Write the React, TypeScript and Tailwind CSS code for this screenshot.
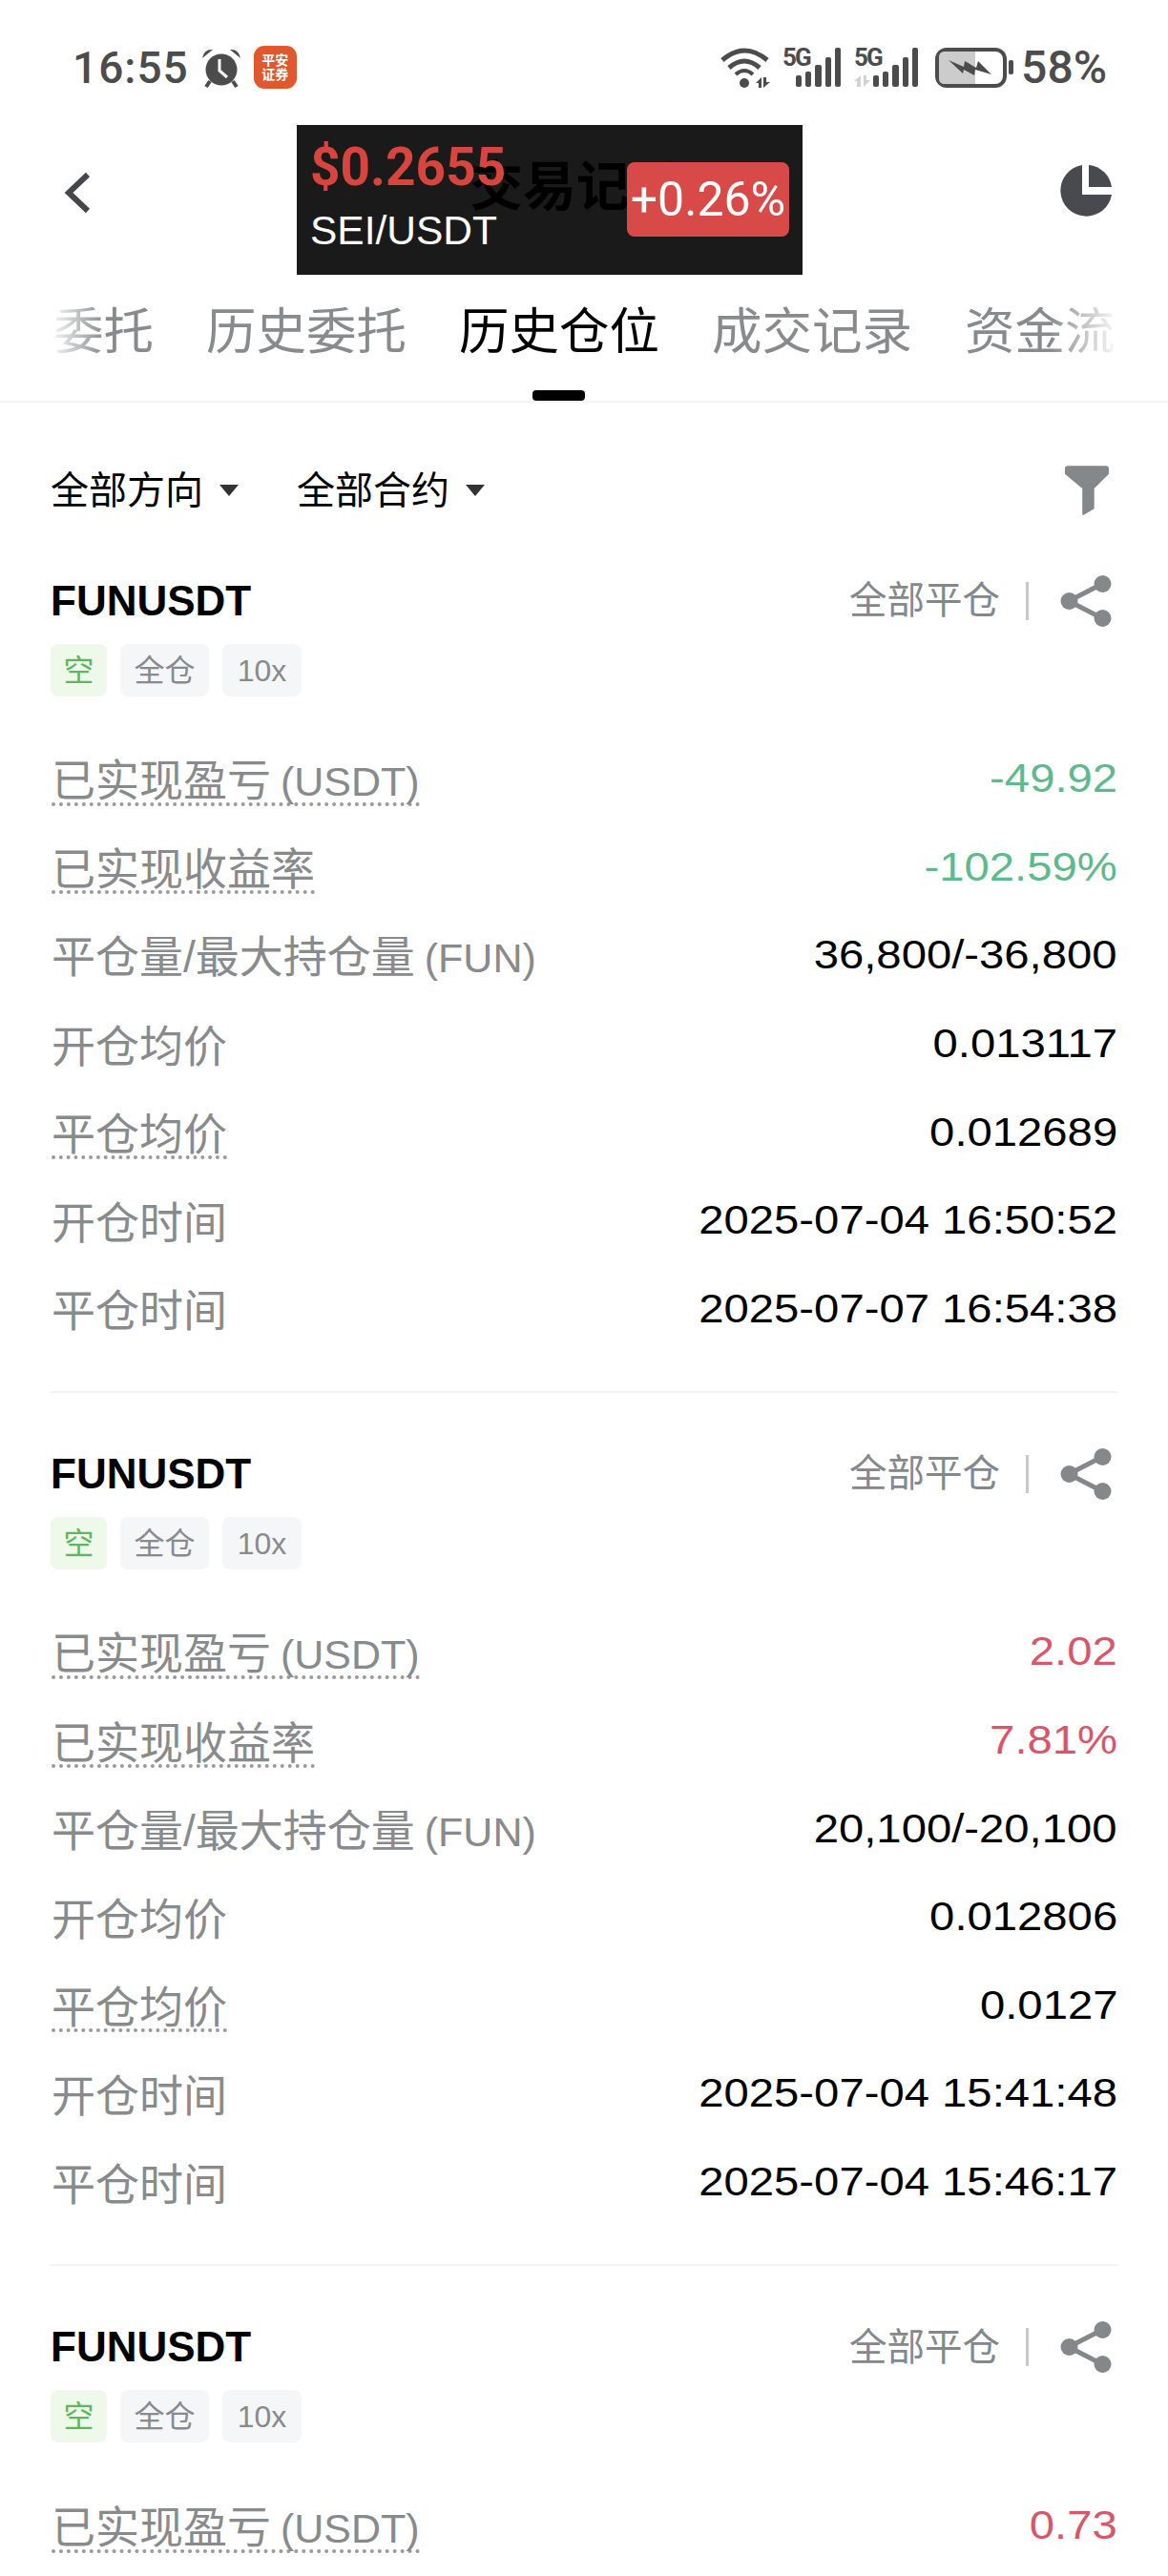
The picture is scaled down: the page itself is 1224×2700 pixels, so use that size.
const cjk = '"Liberation Sans", "Noto Sans CJK SC", sans-serif';

const BackIcon = () => (
  <svg width="32" height="46" viewBox="0 0 32 46" fill="none">
    <path d="M27 4 L7 23 L27 42" stroke="#44464b" strokeWidth="6" />
  </svg>
);

const PieIcon = () => (
  <svg width="54" height="54" viewBox="0 0 54 54">
    <path d="M23 0 A27 27 0 1 0 54 31 H23 Z" fill="#484a50" />
    <path d="M30 0 A27 27 0 0 1 54 23 H30 Z" fill="#484a50" />
  </svg>
);

const FilterIcon = () => (
  <svg width="46" height="54" viewBox="0 0 48 54">
    <path d="M3 0 H45 Q48 0 48 3 V9 L32 25 V47 L20 54 Q19 54 19 52 V25 L0 9 V3 Q0 0 3 0 Z" fill="#85888a" />
  </svg>
);

const ShareIcon = () => (
  <svg width="54" height="54" viewBox="0 0 54 54">
    <path d="M9 27 L44 9 M9 27 L44 45" stroke="#85888a" strokeWidth="5" />
    <circle cx="9.5" cy="27" r="9" fill="#85888a" />
    <circle cx="44.5" cy="9" r="9" fill="#85888a" />
    <circle cx="44.5" cy="45" r="9" fill="#85888a" />
  </svg>
);

const Signal = ({ dim }: { dim?: boolean }) => (
  <div className={`relative flex h-[41px] items-end justify-end gap-[4px] ${dim ? "w-[67px]" : "w-[61px]"}`}>
    <span className="absolute left-0 top-0 font-['Roboto'] text-[26px] font-bold leading-[20px] tracking-[-2px]">5G</span>
    {dim && (
      <svg width="17" height="12" viewBox="0 0 17 12" className="absolute bottom-0 left-0">
        <path d="M7 0 V12 H3 V6 H0 Z M10 12 V0 H13 V5 H17 Z" fill="#d2d2d2" />
      </svg>
    )}
    <div className="h-[12px] w-[6.3px] rounded-[2px] bg-[#4c4c4c]" />
    <div className="h-[16px] w-[6.3px] rounded-[2px] bg-[#4c4c4c]" />
    <div className="h-[23px] w-[6.3px] rounded-[2px] bg-[#4c4c4c]" />
    <div className="h-[31px] w-[6.3px] rounded-[2px] bg-[#4c4c4c]" />
    <div className="h-[41px] w-[6.3px] rounded-[2px] bg-[#4c4c4c]" />
  </div>
);

const StatusBar = () => (
  <div className="flex h-[131px] items-center justify-between pl-[76px] pr-[64px] pt-[10px] text-[#4c4c4c]">
    <div className="flex items-center">
      <span className="font-['Roboto'] text-[46px] font-medium leading-none tracking-[1px]">16:55</span>
      <svg width="44" height="42" viewBox="0 0 42 42" className="ml-[12px]">
        <circle cx="21" cy="23" r="16.5" fill="#4c4c4c" />
        <path d="M19 12 V24 L27 31" stroke="#fff" strokeWidth="3" fill="none" />
        <path d="M1 11 Q3 1 12 2 Z M41 11 Q39 1 30 2 Z" fill="#4c4c4c" />
        <path d="M9 35 L5 41 M33 35 L37 41" stroke="#4c4c4c" strokeWidth="4" />
      </svg>
      <div className="ml-[12px] flex h-[45px] w-[45px] flex-col items-center justify-center rounded-[11px] bg-[#e0582d] text-[14px] font-bold leading-[15px] text-white">
        <span>平安</span>
        <span>证券</span>
      </div>
    </div>
    <div className="flex items-center">
      <svg width="52" height="42" viewBox="0 0 52 42" fill="none">
        <path d="M2 13 Q25 -7 49 13" stroke="#4c4c4c" strokeWidth="5" />
        <path d="M9 21 Q25 7 41 21" stroke="#4c4c4c" strokeWidth="5" />
        <path d="M16 28 Q25 20 34 28" stroke="#4c4c4c" strokeWidth="4" />
        <circle cx="25" cy="37" r="5" fill="#4c4c4c" />
        <path d="M43 31 V42 H40 V37 H37 Z M45 42 V31 H48 V36 H52 Z" fill="#4c4c4c" />
      </svg>
      <div className="ml-[13px]"><Signal /></div>
      <div className="ml-[14px]"><Signal dim /></div>
      <svg width="82" height="42" viewBox="0 0 82 42" className="ml-[18px]">
        <rect x="2" y="2" width="71" height="38" rx="10" fill="#fff" stroke="#4c4c4c" strokeWidth="4" />
        <path d="M4 10 Q4 4 10 4 H42 V38 H10 Q4 38 4 32 Z" fill="#cccccc" />
        <path d="M14 13 L30 20 L31 14 L43 21 L45 14 L59 28 L42 23 L41 29 L30 23 L29 27 Z" fill="#4c4c4c" />
        <rect x="77" y="13" width="5" height="15" rx="2" fill="#4c4c4c" />
      </svg>
      <span className="ml-[8px] font-['Roboto'] text-[48px] font-medium leading-none">58%</span>
    </div>
  </div>
);

const NavBar = () => (
  <div className="relative flex h-[157px] items-center justify-between pl-[65px] pr-[59px]">
    <div className="absolute left-[311px] top-0 h-[157px] w-[530px] bg-[#1a1a1a]" />
    <div className="-mt-[16px]"><BackIcon /></div>
    <div className="relative -mt-[28px] w-[224px] text-center text-[56px] font-bold leading-none text-black">交易记录</div>
    <div className="-mt-[20px]"><PieIcon /></div>
    <div className="absolute left-[325px] top-[17px] font-['Roboto'] text-[55px] font-bold leading-none text-[#d8453f]">$0.2655</div>
    <div className="absolute left-[325px] top-[90px] text-[42.5px] leading-none text-white">SEI/USDT</div>
    <div className="absolute left-[657px] top-[39px] flex h-[78px] w-[170px] items-center justify-center rounded-[8px] bg-[#d84a47] font-['Roboto'] text-[50px] leading-none text-white">+0.26%</div>
  </div>
);

const Tabs = () => (
  <div className="relative h-[134px] border-b-2 border-[#f3f3f3]">
    <div className="flex items-center gap-[55px] pl-[56px] pt-[34px] text-[52.5px] leading-none text-[#888a8c]">
      <span>委托</span>
      <span>历史委托</span>
      <span className="text-black">历史仓位</span>
      <span>成交记录</span>
      <span className="w-[160px] overflow-hidden whitespace-nowrap">资金流水</span>
    </div>
    <div className="absolute left-[558px] top-[121px] h-[11px] w-[55px] rounded-[4px] bg-black" />
    <div className="absolute left-[50px] top-0 h-[110px] w-[60px] bg-gradient-to-r from-white to-transparent" />
    <div className="absolute left-[1100px] top-0 h-[110px] w-[74px] bg-gradient-to-l from-white to-transparent" />
    <div className="absolute left-[1170px] top-0 h-[110px] w-[54px] bg-white" />
  </div>
);

const Caret = () => <div className="h-0 w-0 border-x-[10px] border-t-[12px] border-x-transparent border-t-[#333333]" />;

const Filters = () => (
  <div className="flex h-[181px] items-center justify-between pl-[53px] pr-[62px] pt-[2px]">
    <div className="flex items-center text-[40px] leading-none text-black">
      <span>全部方向</span>
      <div className="ml-[17px] mr-[61px]"><Caret /></div>
      <span>全部合约</span>
      <div className="ml-[17px]"><Caret /></div>
    </div>
    <FilterIcon />
  </div>
);

type Row = { label: string; unit?: string; value: string; dotted?: boolean; color?: string };

const InfoRow = ({ label, unit, value, dotted, color }: Row) => (
  <div className="flex h-[92.6px] items-center justify-between">
    <span className={`ml-[1px] mt-[9px] border-b-4 border-dotted text-[46px] leading-[44px] text-[#888a8c] ${dotted ? "border-[#9a9a9a]" : "border-transparent"}`}>
      {label}
      {unit && <span className="ml-[10px] text-[43px]">{unit}</span>}
    </span>
    <span className={`origin-right scale-x-[1.125] text-[42px] leading-none ${color ?? "text-black"}`}>{value}</span>
  </div>
);

const Position = ({ rows }: { rows: Row[] }) => (
  <div className="border-b-2 border-[#f3f3f3] pb-[40px]">
    <div className="flex items-center justify-between">
      <span className="text-[44px] font-bold leading-none text-black">FUNUSDT</span>
      <div className="flex items-center pr-[6px] text-[39.5px] leading-none text-[#85888a]">
        <span>全部平仓</span>
        <div className="ml-[27px] mr-[33px] h-[40px] w-[3px] bg-[#c8c8c8]" />
        <ShareIcon />
      </div>
    </div>
    <div className="mt-[18px] flex gap-[14px] text-[32px] leading-none text-[#888a8c]">
      <div className="flex h-[55px] w-[59px] items-center justify-center rounded-[8px] bg-[#eef9ec] text-[#5cb85c]">空</div>
      <div className="flex h-[55px] w-[93px] items-center justify-center rounded-[8px] bg-[#f4f6f8]">全仓</div>
      <div className="flex h-[55px] w-[83px] items-center justify-center rounded-[8px] bg-[#f4f6f8]">10x</div>
    </div>
    <div className="mt-[40px]">
      {rows.map((r) => (
        <InfoRow key={r.label} {...r} />
      ))}
    </div>
  </div>
);

const green = "text-[#5fb98d]";
const red = "text-[#d9566a]";

const makeRows = (pnl: string, rate: string, color: string, qty: string, open: string, close: string, openAt: string, closeAt: string): Row[] => [
  { label: "已实现盈亏", unit: "(USDT)", value: pnl, dotted: true, color },
  { label: "已实现收益率", value: rate, dotted: true, color },
  { label: "平仓量/最大持仓量", unit: "(FUN)", value: qty },
  { label: "开仓均价", value: open },
  { label: "平仓均价", value: close, dotted: true },
  { label: "开仓时间", value: openAt },
  { label: "平仓时间", value: closeAt },
];

const App = () => (
  <div className="h-[2700px] w-[1224px] overflow-hidden bg-white" style={{ fontFamily: cjk }}>
    <StatusBar />
    <NavBar />
    <Tabs />
    <Filters />
    <div className="flex flex-col gap-[58px] px-[53px]">
      <Position rows={makeRows("-49.92", "-102.59%", green, "36,800/-36,800", "0.013117", "0.012689", "2025-07-04 16:50:52", "2025-07-07 16:54:38")} />
      <Position rows={makeRows("2.02", "7.81%", red, "20,100/-20,100", "0.012806", "0.0127", "2025-07-04 15:41:48", "2025-07-04 15:46:17")} />
      <Position rows={makeRows("0.73", "2.91%", red, "7,300/-7,300", "0.012800", "0.0127", "2025-07-04 15:41:48", "2025-07-04 15:46:17")} />
    </div>
  </div>
);

export default App;
